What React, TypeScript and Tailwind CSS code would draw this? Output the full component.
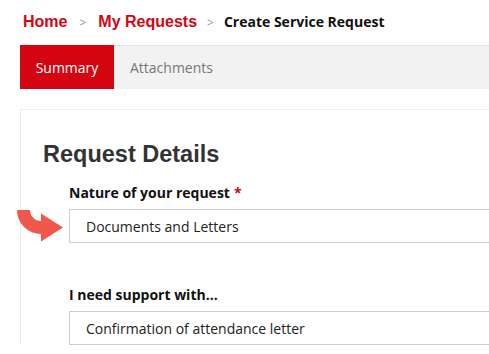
import React from 'react';

// Curved "look here" arrow pointing at the first field
function PointerArrow() {
  return (
    <svg width="48" height="33" viewBox="0 0 48 33" className="block">
      <path
        d="M0 0 L13 0 A11 11 0 0 0 24 11 L24 3.5 L46 17.5 L24 31.5 L24 24 A24 24 0 0 1 0 0 Z"
        fill="#f0584c"
      />
    </svg>
  );
}

function Field({ label, value, required }: { label: string; value: string; required?: boolean }) {
  return (
    <div className="flex flex-col">
      <div className="text-[14px] font-bold text-[#111] leading-[20px] mb-[6px]">
        {label}
        {required && <span className="text-[#d40511] ml-[4px]">*</span>}
      </div>
      <div className="h-[34px] border border-[#cfcfcf] border-r-0 bg-white flex items-center pl-[16px] text-[14px] text-[#222]">
        {value}
      </div>
    </div>
  );
}

export default function App() {
  return (
    <div className="min-h-screen bg-white overflow-hidden font-['Open_Sans',sans-serif]">
      <div className="pl-[23px] pt-[10px] h-[45px] flex items-start">
        <div className="flex items-baseline">
          <span className="font-['Liberation_Sans',Arial,sans-serif] font-bold text-[16px] text-[#d40511]">Home</span>
          <span className="text-[12px] text-[#999] mx-[12px]">&gt;</span>
          <span className="font-['Liberation_Sans',Arial,sans-serif] font-bold text-[16px] text-[#d40511]">My Requests</span>
          <span className="text-[12px] text-[#999] mx-[10px]">&gt;</span>
          <span className="font-bold text-[14px] text-[#111]">Create Service Request</span>
        </div>
      </div>

      <div className="ml-[20px] h-[44px] bg-[#f2f2f2] border-t border-[#e4e4e4] flex">
        <div className="w-[94px] bg-[#d40511] text-white text-[14px] flex items-center justify-center -mt-px">
          Summary
        </div>
        <div className="pl-[16px] text-[14px] text-[#777] flex items-center">Attachments</div>
      </div>

      <div className="ml-[20px] mt-[20px] border-l border-t border-[#ececec] pl-[22px] pt-[30px]">
        <h2 className="font-['Liberation_Sans',Arial,sans-serif] font-bold text-[23.5px] text-[#333] leading-[28px]">
          Request Details
        </h2>
        <div className="relative mt-[15px] pl-[26px]">
          <div className="absolute left-[-26px] top-[27px]">
            <PointerArrow />
          </div>
          <Field label="Nature of your request" value="Documents and Letters" required />
          <div className="h-[42px]" />
          <Field label="I need support with..." value="Confirmation of attendance letter" />
        </div>
      </div>
    </div>
  );
}
